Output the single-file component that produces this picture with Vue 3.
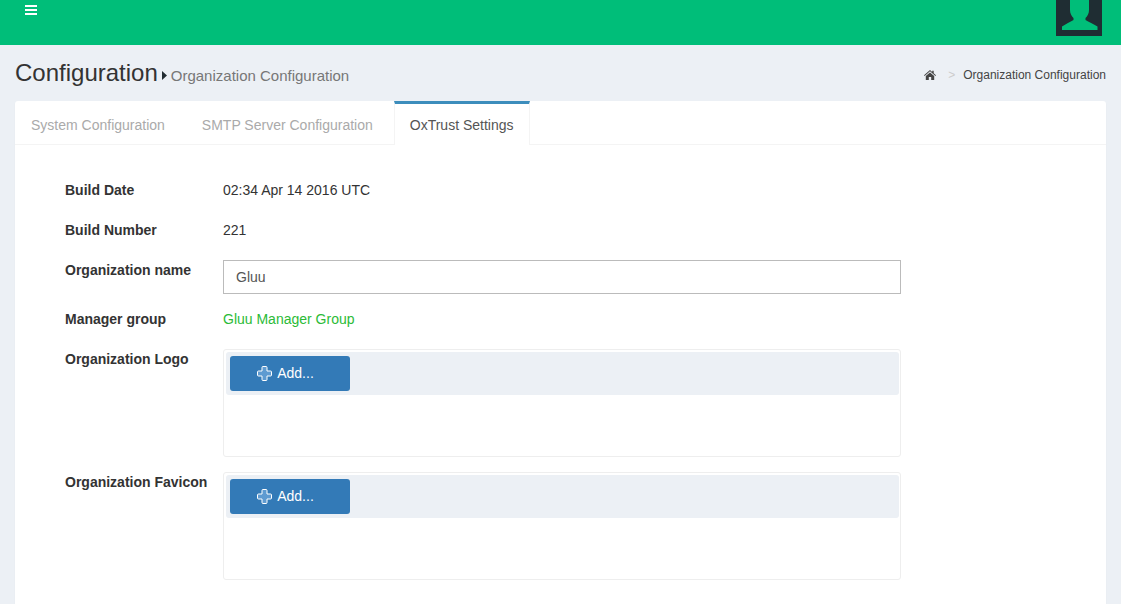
<script setup>
const rows = [
  { label: 'Build Date', value: '02:34 Apr 14 2016 UTC' },
  { label: 'Build Number', value: '221' },
]
const uploads = ['Organization Logo', 'Organization Favicon']
</script>

<template>
  <div class="page">
    <header class="topbar">
      <svg class="burger" width="12" height="10" viewBox="0 0 12 10"><path d="M0 0h12v2H0zM0 4h12v2H0zM0 8h12v2H0z" fill="#fff"/></svg>
      <div class="avatar">
        <svg width="46" height="36" viewBox="0 0 46 36"><rect width="46" height="36" fill="#1f2d33"/><path d="M14 -2h19v12c0 3.500-1.500 6-3.500 8v2c3 1.800 8 4 12 6.500V30H6v-3.500c4-2.500 8-4.700 11.500-6.500v-2c-2-2-3.500-4.500-3.500-8z" fill="#00be79"/></svg>
      </div>
    </header>

    <section class="heading">
      <div class="title">
        <h1>Configuration</h1>
        <svg class="caret" width="5" height="9" viewBox="0 0 5 9"><path d="M0 0l5 4.500-5 4.500z" fill="#222d32"/></svg>
        <small>Organization Configuration</small>
      </div>
      <nav class="crumbs">
        <svg width="12" height="10" viewBox="0 0 12 10"><path d="M6 0l2.200 1.900V.8h1.500v2.400L12 5.200l-.6.7L6 1.300.6 5.900 0 5.200zM1.800 6L6 2.500 10.200 6v4H7.200V7H4.800v3H1.800z" fill="#444"/></svg>
        <span class="sep">&gt;</span>
        <span>Organization Configuration</span>
      </nav>
    </section>

    <main class="card">
      <ul class="tabs">
        <li>System Configuration</li>
        <li>SMTP Server Configuration</li>
        <li class="active">OxTrust Settings</li>
      </ul>
      <div class="form">
        <div v-for="r in rows" :key="r.label" class="row">
          <label>{{ r.label }}</label>
          <div>{{ r.value }}</div>
        </div>
        <div class="row tight">
          <label>Organization name</label>
          <input class="field" value="Gluu" />
        </div>
        <div class="row">
          <label>Manager group</label>
          <a class="link">Gluu Manager Group</a>
        </div>
        <div v-for="u in uploads" :key="u" class="row tight">
          <label>{{ u }}</label>
          <div class="upload">
            <div class="bar">
              <button class="add">
                <svg width="15" height="15" viewBox="0 0 15 15"><path d="M5 1.500a1 1 0 0 1 1-1h3a1 1 0 0 1 1 1V5h3.500a1 1 0 0 1 1 1v3a1 1 0 0 1-1 1H10v3.500a1 1 0 0 1-1 1H6a1 1 0 0 1-1-1V10H1.500a1 1 0 0 1-1-1V6a1 1 0 0 1 1-1H5z" fill="#5f9bd1" stroke="#fff" stroke-width="1"/></svg>
                <span>Add...</span>
              </button>
            </div>
          </div>
        </div>
      </div>
    </main>
  </div>
</template>

<style scoped>
.page {
  height: 604px;
  overflow: hidden;
  background: #ecf0f5;
  font: 14px/20px "Liberation Sans", Arial, sans-serif;
  color: #333;
}
.topbar {
  height: 45px;
  background: #00be79;
  display: flex;
  justify-content: space-between;
  align-items: flex-start;
  padding: 0 19px 0 25px;
}
.burger { margin-top: 5px; display: block; }
.avatar { height: 36px; }
.avatar svg { display: block; }
.heading {
  height: 56px;
  display: flex;
  justify-content: space-between;
  padding: 0 15px;
}
.title { display: flex; align-items: baseline; padding-top: 13px; }
h1 { margin: 0; font-size: 24px; line-height: 29px; font-weight: 400; color: #333; }
.caret { margin: 13px 4px 0 4px; align-self: flex-start; }
small { font-size: 15px; color: #777; line-height: 20px; }
.crumbs {
  display: flex;
  align-items: center;
  height: 20px;
  margin-top: 20px;
  font-size: 12px;
  color: #444;
}
.sep { color: #ccc; margin: 0 8px 0 12px; }
.card {
  margin: 0 15px;
  height: 520px;
  background: #fff;
  border-radius: 3px;
  box-shadow: 0 1px 1px rgba(0,0,0,.1);
}
.tabs {
  list-style: none;
  margin: 0;
  padding: 0;
  display: flex;
  gap: 5px;
  height: 43px;
  border-bottom: 1px solid #f4f4f4;
}
.tabs li {
  padding: 14px 16px 0;
  color: #aaa;
  height: 43px;
  box-sizing: border-box;
}
.tabs li.active {
  color: #555;
  background: #fff;
  border-top: 3px solid #3c8dbc;
  border-left: 1px solid #f4f4f4;
  border-right: 1px solid #f4f4f4;
  height: 44px;
  padding: 11px 15px 0;
}
.form { padding: 35px 0 0 50px; }
.row {
  display: grid;
  grid-template-columns: 158px 678px;
  margin-bottom: 20px;
  align-items: start;
}
.row.tight { margin-bottom: 15px; }
label { font-weight: 700; }
.field {
  box-sizing: border-box;
  width: 100%;
  height: 34px;
  padding: 0 12px;
  border: 1px solid #bbb;
  font: inherit;
  color: #555;
  outline: none;
  background: #fff;
}
.link { color: #2bbb37; }
.upload {
  box-sizing: border-box;
  height: 108px;
  border: 1px solid #eee;
  border-radius: 3px;
  padding: 2px 1px 0 2px;
}
.bar {
  height: 43px;
  box-sizing: border-box;
  background: #ecf0f5;
  border-radius: 3px;
  padding: 4px;
}
.add {
  width: 120px;
  height: 35px;
  border: 0;
  border-radius: 3px;
  background: #337ab7;
  color: #fff;
  font: inherit;
  display: flex;
  align-items: center;
  justify-content: center;
  gap: 5px;
  padding: 0 9px 2px 0;
}
.add svg { margin-top: 2px; }
</style>

<style>
html, body { margin: 0; }
</style>
